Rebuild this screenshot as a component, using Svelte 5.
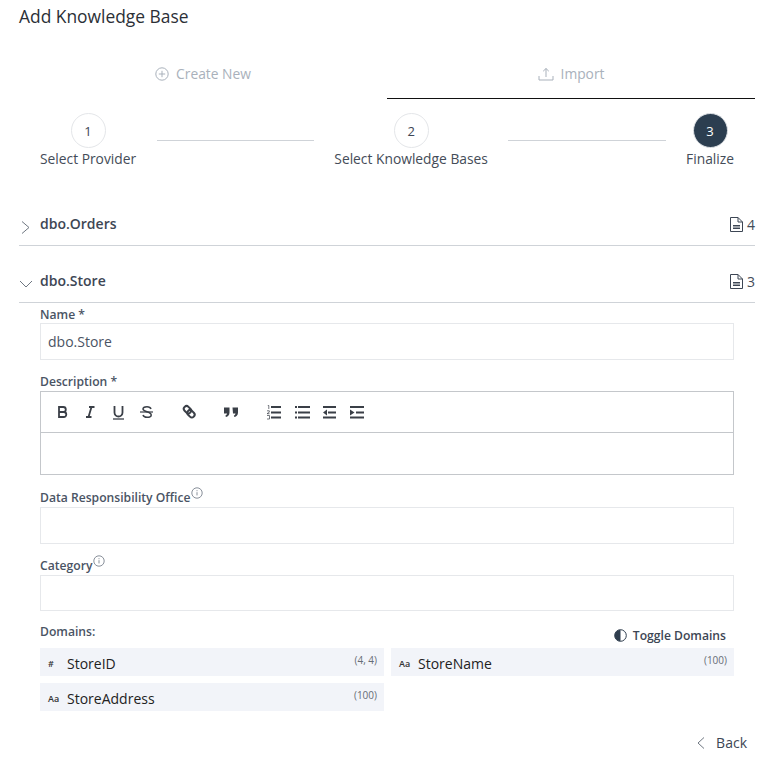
<script lang="ts">
  const steps = [
    { n: 1, label: 'Select Provider' },
    { n: 2, label: 'Select Knowledge Bases' },
    { n: 3, label: 'Finalize', active: true },
  ]
  const domains = [
    { type: '#', name: 'StoreID', size: '(4, 4)' },
    { type: 'Aa', name: 'StoreName', size: '(100)' },
    { type: 'Aa', name: 'StoreAddress', size: '(100)' },
  ]
</script>

{#snippet docIcon()}
  <svg class="doc" width="13" height="15" viewBox="0 0 13 15" fill="none" stroke="#3d4654" stroke-width="1">
    <path d="M.5 .5h7.500l4.500 4.500v9.500h-12z" />
    <path d="M8 .5v4.500h4.500" />
    <path d="M3 8.500h7M3 10h7M3 11.500h7" />
  </svg>
{/snippet}

{#snippet info()}
  <svg class="info" width="12" height="12" viewBox="0 0 12 12" fill="none" stroke="#6b7480" stroke-width="0.8">
    <circle cx="6" cy="6" r="5.200" />
    <path d="M6 5.200v3.200M6 3.200v1" />
  </svg>
{/snippet}

<main class="page">
  <h1>Add Knowledge Base</h1>

  <div class="tabs">
    <div class="tab">
      <svg width="14" height="14" viewBox="0 0 14 14" fill="none" stroke="#a9b1bb" stroke-width="1">
        <circle cx="7" cy="7" r="6.200" />
        <path d="M7 3.800v6.400M3.800 7h6.400" />
      </svg>
      <span>Create New</span>
    </div>
    <div class="tab selected">
      <svg width="16" height="14" viewBox="0 0 16 14" fill="none" stroke="#a9b1bb" stroke-width="1">
        <path d="M8 10V1.500M5.200 4.200 8 1.500l2.800 2.700" />
        <path d="M1 9v4h14V9" />
      </svg>
      <span>Import</span>
    </div>
  </div>

  <div class="steps">
    {#each steps as s, i}
      {#if i > 0}<div class="connector"></div>{/if}
      <div class="step">
        <div class="circle" class:active={s.active}>{s.n}</div>
        <div class="step-label">{s.label}</div>
      </div>
    {/each}
  </div>

  <div class="acc-row first">
    <svg class="chev" width="12" height="14" viewBox="0 0 12 14" fill="none" stroke="#6f7782" stroke-width="1">
      <path d="M3 1.500 10 7.500 3 13.500" />
    </svg>
    <span class="acc-title">dbo.Orders</span>
    <span class="count">{@render docIcon()}4</span>
  </div>

  <div class="acc-row second">
    <svg class="chev" width="14" height="10" viewBox="0 0 14 10" fill="none" stroke="#6f7782" stroke-width="1">
      <path d="M1 2 7 8 13 2" />
    </svg>
    <span class="acc-title">dbo.Store</span>
    <span class="count">{@render docIcon()}3</span>
  </div>

  <form class="form">
    <div class="label name-label">Name *</div>
    <div class="input value">dbo.Store</div>

    <div class="label desc-label">Description *</div>
    <div class="editor">
      <div class="toolbar">
        <svg width="312" height="16" viewBox="0 0 312 16" fill="none" stroke="#3a3f47" stroke-width="1.800">
          <!-- bold -->
          <path d="M3 3h4.300a2.500 2.500 0 0 1 0 5H3zM3 8h4.800a2.500 2.500 0 0 1 0 5H3z" />
          <!-- italic -->
          <path d="M33 3h5.500M30 13h5.500M35.500 3l-3 10" />
          <!-- underline -->
          <path d="M58.500 2v6.500a4 4 0 0 0 8 0V2" />
          <path d="M57 15h11" stroke-width="1.300" />
          <!-- strike -->
          <path d="M84 8h13" stroke-width="1.200" />
          <path d="M95 5c-.5-1.600-2-2.300-4-2.300-2.400 0-4 1-4 2.400 0 3 8.200 2.400 8.200 5.800 0 1.400-1.800 2.400-4.200 2.400-2 0-3.500-.7-4-2.300" stroke-width="1.500" />
          <!-- link -->
          <rect x="127.500" y="3" width="8" height="5.500" rx="2.700" transform="rotate(45 131.500 5.700)" stroke-width="2" />
          <rect x="131" y="7" width="8" height="5.500" rx="2.700" transform="rotate(45 135 9.700)" stroke-width="2" />
          <!-- quote -->
          <path d="M168 3.500h5.500v5c0 2.500-1.500 4-3.500 4.500l-.7-1.300c1-.4 1.600-1.100 1.700-2.200H168zM176.500 3.500h5.500v5c0 2.500-1.500 4-3.500 4.500l-.7-1.300c1-.4 1.600-1.100 1.700-2.200h-2.500z" fill="#3a3f47" stroke="none" />
          <!-- ordered list -->
          <path d="M215 3h10M215 8.500h10M215 13.500h10" />
          <path d="M211.800 1.500h1v3.500M211 6.800h2.300v1.400l-2.300 1.500h2.500M211 11.500h2.500v3.500H211" stroke-width="0.700" />
          <!-- bullet list -->
          <path d="M242 3h12M242 8.500h12M242 13.500h12M239 3h2M239 8.500h2M239 13.500h2" />
          <!-- outdent -->
          <path d="M267 3h13M272 8.500h8M267 13.500h13" />
          <path d="M271 5.500v6l-4-3z" fill="#3a3f47" stroke="none" />
          <!-- indent -->
          <path d="M294 3h14M300 8.500h8M294 13.500h14" />
          <path d="M294 5.500v6l4.500-3z" fill="#3a3f47" stroke="none" />
        </svg>
      </div>
      <div class="editor-body"></div>
    </div>

    <div class="label office-label">Data Responsibility Office{@render info()}</div>
    <div class="input"></div>

    <div class="label cat-label">Category{@render info()}</div>
    <div class="input cat-input"></div>

    <div class="domain-head">
      <span class="label">Domains:</span>
      <span class="toggle">
        <svg width="13" height="13" viewBox="0 0 13 13">
          <circle cx="6.500" cy="6.500" r="5.800" fill="none" stroke="#2f3d4e" stroke-width="1" />
          <path d="M6.500 .7a5.800 5.800 0 0 0 0 11.600z" fill="#2f3d4e" />
        </svg>
        Toggle Domains
      </span>
    </div>
    <div class="domains">
      {#each domains as d}
        <div class="domain">
          <span class="type">{d.type}</span>
          <span class="dname">{d.name}</span>
          <span class="size">{d.size}</span>
        </div>
      {/each}
    </div>
  </form>

  <div class="footer">
    <svg width="10" height="14" viewBox="0 0 10 14" fill="none" stroke="#6f7782" stroke-width="1">
      <path d="M8 1.500 2 7l6 5.500" />
    </svg>
    <span>Back</span>
  </div>
</main>

<style>
  :global(body) {
    margin: 0;
    background: #fff;
    font-family: "Open Sans", sans-serif;
    color: #3d4654;
  }
  .page {
    width: 775px;
    height: 770px;
    box-sizing: border-box;
    padding: 4px 20px 0 19px;
    overflow: hidden;
  }
  h1 {
    margin: 0;
    font-size: 17.400px;
    font-weight: 400;
    line-height: 24px;
    color: #2b2f36;
  }
  .tabs {
    display: flex;
    margin-top: 32px;
  }
  .tab {
    flex: 1;
    height: 39px;
    box-sizing: border-box;
    display: flex;
    align-items: center;
    justify-content: center;
    gap: 7px;
    font-size: 13.800px;
    color: #a9b1bb;
    padding-bottom: 12px;
  }
  .tab.selected {
    border-bottom: 1.500px solid #111;
    padding-bottom: 11px;
  }
  .steps {
    display: flex;
    align-items: flex-start;
    gap: 20.500px;
    margin: 14px 21px 0;
  }
  .connector {
    flex: 1;
    height: 1px;
    background: #cfd3d8;
    margin-top: 27px;
  }
  .step {
    display: flex;
    flex-direction: column;
    align-items: center;
  }
  .circle {
    width: 35px;
    height: 35px;
    box-sizing: border-box;
    border: 1px solid #e4e6e9;
    border-radius: 50%;
    display: flex;
    align-items: center;
    justify-content: center;
    font-size: 13px;
    color: #3d4654;
  }
  .circle.active {
    background: #2c3e50;
    color: #fff;
    border-color: #dfe2e6;
  }
  .step-label {
    font-size: 13.800px;
    line-height: 18px;
    margin-top: 2px;
    color: #444c58;
    white-space: nowrap;
  }
  .acc-row {
    display: flex;
    align-items: center;
    height: 43px;
    border-bottom: 1px solid #cfd3d8;
    box-sizing: border-box;
    position: relative;
    padding-left: 21px;
  }
  .acc-row.first {
    margin-top: 35px;
  }
  .acc-row.second {
    margin-top: 14px;
  }
  .chev {
    position: absolute;
    left: 0;
    top: 17px;
  }
  .acc-row.second .chev {
    top: 19px;
  }
  .acc-title {
    font-size: 14px;
    font-weight: 600;
    color: #3d4654;
    padding-bottom: 1px;
  }
  .count {
    margin-left: auto;
    display: inline-flex;
    align-items: center;
    gap: 4px;
    font-size: 14px;
    color: #444c58;
  }
  .form {
    margin: 0 21px;
  }
  .label {
    font-size: 12.150px;
    font-weight: 600;
    line-height: 16px;
    color: #4a5464;
  }
  .name-label {
    margin-top: 4px;
  }
  .info {
    vertical-align: 3px;
    margin-left: 1px;
  }
  .input {
    height: 37px;
    box-sizing: border-box;
    border: 1px solid #e6e8eb;
    padding: 0 7px;
    display: flex;
    align-items: center;
    font-size: 14px;
    color: #4a5464;
  }
  .desc-label {
    margin-top: 14px;
  }
  .editor {
    margin-top: 1px;
    border: 1px solid #c4c7cb;
  }
  .toolbar {
    height: 40px;
    border-bottom: 1px solid #c4c7cb;
    display: flex;
    align-items: center;
    padding-left: 15px;
  }
  .editor-body {
    height: 41px;
  }
  .office-label {
    margin: 12px 0 1px;
  }
  .cat-label {
    margin: 11px 0 1px;
  }
  .cat-input {
    height: 36px;
  }
  .domain-head {
    display: flex;
    justify-content: space-between;
    align-items: flex-start;
    margin-top: 13px;
  }
  .toggle {
    display: inline-flex;
    align-items: center;
    gap: 6px;
    margin: 3px 8px 0 0;
    font-size: 12.150px;
    font-weight: 600;
    color: #3d4654;
  }
  .domains {
    display: grid;
    grid-template-columns: 344px 343px;
    justify-content: space-between;
    gap: 7px;
    margin-top: 4px;
  }
  .domain {
    height: 28px;
    background: #f2f4f9;
    display: flex;
    align-items: center;
    position: relative;
    padding: 2px 0 0 8px;
    box-sizing: border-box;
  }
  .type {
    width: 19px;
    font-size: 9px;
    font-weight: 600;
    color: #333;
  }
  .dname {
    font-size: 14px;
    color: #222;
  }
  .size {
    position: absolute;
    right: 7px;
    top: 5px;
    font-size: 10px;
    color: #666c75;
  }
  .footer {
    display: flex;
    justify-content: flex-end;
    align-items: center;
    gap: 10px;
    margin-top: 22px;
    padding-right: 8px;
    font-size: 14px;
    color: #3d4654;
  }
</style>
